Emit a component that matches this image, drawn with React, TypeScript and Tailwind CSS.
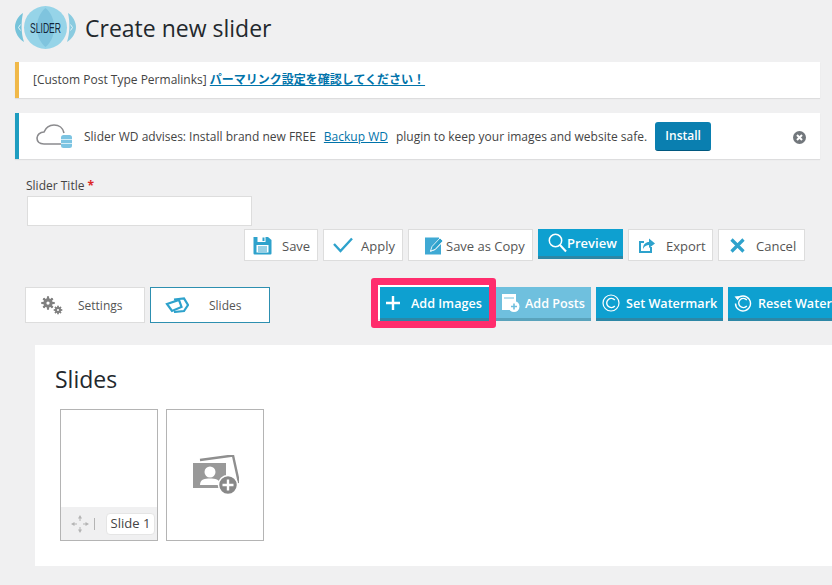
import React from "react";

const font = { fontFamily: '"Open Sans","Noto Sans CJK JP",sans-serif' };

function Logo() {
  return (
    <svg width="61" height="45" viewBox="0 0 61 45" className="shrink-0">
      <path d="M8 8 C3 11 0 17 0 22 C0 28 4 34 9 37 C6 28 6 17 8 8Z" fill="#76c3da" />
      <path d="M53 8 C58 11 61 17 61 22 C61 28 57 34 52 37 C55 28 55 17 53 8Z" fill="#8acbe0" />
      <path d="M5.5 19.5 L3.5 22.5 L5.5 25.5 M55.5 19.5 L57.5 22.5 L55.5 25.5" fill="none" stroke="#e2f3f8" strokeWidth="1" />
      <circle cx="30.5" cy="22.5" r="21.5" fill="#96d4e8" />
      <path d="M30.5 3 C42 12 42 33 30.5 42 C19 33 19 12 30.5 3Z" fill="#7fc4de" />
      <text x="30.5" y="27.5" textAnchor="middle" fontSize="14" fill="#12263a" style={{ fontFamily: '"Liberation Sans",sans-serif' }} textLength="31" lengthAdjust="spacingAndGlyphs">SLIDER</text>
    </svg>
  );
}

function Cloud() {
  return (
    <svg width="37" height="24" viewBox="0 0 37 24" className="shrink-0">
      <path d="M26 20 H8 C3 20 1 17 1 14 C1 11 4 8 8 8 C10 3 14 1 18 1 C23 1 27 4 28 9" fill="none" stroke="#8b8b8e" strokeWidth="1.6" />
      <rect x="25" y="11" width="11" height="13" rx="2.5" fill="#7cc4e2" />
      <path d="M25 15.5H36M25 19.5H36" stroke="#d5eef8" strokeWidth="1" />
    </svg>
  );
}

function SaveIcon() {
  return (
    <svg width="19" height="19" viewBox="0 0 19 19">
      <path d="M1 1H15L18.5 4V17.5a1 1 0 0 1-1 1H1.5a1 1 0 0 1-1-1V1.5Z" fill="#2ea2cc" />
      <rect x="4.5" y="1" width="8" height="5" fill="#fff" />
      <rect x="9.5" y="1.5" width="2" height="3.5" fill="#2ea2cc" />
      <rect x="3.5" y="9" width="12" height="7.5" fill="#fff" />
      <path d="M5 11H14M5 13H14M5 15H14" stroke="#2ea2cc" strokeWidth="1" />
    </svg>
  );
}

function CheckIcon() {
  return (
    <svg width="20" height="16" viewBox="0 0 20 16">
      <path d="M1 7 L7.5 14 L19 1.5" fill="none" stroke="#2ea2cc" strokeWidth="2.4" />
    </svg>
  );
}

function CopyIcon() {
  return (
    <svg width="19" height="19" viewBox="0 0 19 19">
      <path d="M0 1.5H14V4L7 11L5 16L10 14L16 8V18.5H0Z" fill="#3fa9d4" />
      <path d="M5.5 15 L7 10.5 L15 2 L18 5 L10 13.5Z" fill="#2ea2cc" stroke="#fff" strokeWidth="0.8" />
    </svg>
  );
}

function SearchIcon() {
  return (
    <svg width="19" height="20" viewBox="0 0 19 20">
      <circle cx="7.5" cy="7.5" r="6.2" fill="none" stroke="#fff" strokeWidth="1.5" />
      <path d="M12 12 L18 18.5" stroke="#fff" strokeWidth="2" />
    </svg>
  );
}

function ExportIcon() {
  return (
    <svg width="17" height="15" viewBox="0 0 17 15">
      <path d="M1 3H6V5H3V13H12V9H14V15H1Z" fill="#2ea2cc" />
      <path d="M5 11 C5 6 8 4 11 4 V0.5 L17 5.5 L11 10 V7 C8.5 7 6.5 8 5 11Z" fill="#2ea2cc" />
    </svg>
  );
}

function CancelIcon() {
  return (
    <svg width="15" height="15" viewBox="0 0 15 15">
      <path d="M1.5 1.5 L13.5 13.5 M13.5 1.5 L1.5 13.5" stroke="#2ea2cc" strokeWidth="3.2" />
    </svg>
  );
}

function GearIcon({ size, x, y }: { size: number; x: number; y: number }) {
  const teeth = [0, 45, 90, 135, 180, 225, 270, 315];
  return (
    <g transform={`translate(${x} ${y})`}>
      {teeth.map((a) => (
        <rect key={a} x={-size * 0.16} y={-size} width={size * 0.32} height={size * 2} fill="#808080" transform={`rotate(${a})`} />
      ))}
      <circle r={size * 0.72} fill="#808080" />
      <circle r={size * 0.25} fill="#fff" />
    </g>
  );
}

function GearsIcon() {
  return (
    <svg width="22" height="19" viewBox="0 0 22 19">
      <GearIcon size={6.5} x={7} y={7} />
      <GearIcon size={4.2} x={17} y={14} />
    </svg>
  );
}

function SlidesIcon() {
  return (
    <svg width="24" height="16" viewBox="0 0 24 16">
      <path d="M9 2.5 L19 1.5 L23 8 L19 14 L9 15" fill="none" stroke="#2ea2cc" strokeWidth="2.2" />
      <path d="M2 7 L14 3 L16.5 10 L7 14 Z" fill="#fff" stroke="#2ea2cc" strokeWidth="2.2" />
    </svg>
  );
}

function PlusIcon() {
  return (
    <svg width="14" height="14" viewBox="0 0 14 14">
      <path d="M7 0V14M0 7H14" stroke="#fff" strokeWidth="2.4" />
    </svg>
  );
}

function PostsIcon() {
  return (
    <svg width="18" height="18" viewBox="0 0 18 18">
      <path d="M0 0H14V10H9V16H0Z" fill="#fff" />
      <path d="M2 4H12" stroke="#6fc0de" strokeWidth="1" />
      <circle cx="12" cy="12.5" r="5.5" fill="#fff" />
      <path d="M12 9.5V15.5M9 12.5H15" stroke="#6fc0de" strokeWidth="1.6" />
    </svg>
  );
}

function CopyrightIcon({ reset }: { reset?: boolean }) {
  return (
    <svg width="18" height="18" viewBox="0 0 18 18">
      {reset ? (
        <>
          <path d="M3 5 A7.5 7.5 0 1 1 1.5 9.5" fill="none" stroke="#fff" strokeWidth="1.4" />
          <path d="M0.5 2.5 L5 2 L4 6.5Z" fill="#fff" />
        </>
      ) : (
        <circle cx="9" cy="9" r="8" fill="none" stroke="#fff" strokeWidth="1.2" />
      )}
      <path d="M12.8 6 A4.6 4.6 0 1 0 12.8 12" fill="none" stroke="#fff" strokeWidth="1.4" />
    </svg>
  );
}

function MoveIcon() {
  return (
    <svg width="20" height="20" viewBox="0 0 20 20">
      <path d="M10 1 L12 4.5H8Z M10 19 L12 15.5H8Z M1 10 L4.5 8V12Z M19 10 L15.5 8V12Z" fill="#b4b4b4" />
      <path d="M10 4V7M10 13V16M4 10H7M13 10H16" stroke="#b4b4b4" strokeWidth="1" />
    </svg>
  );
}

function AddSlideIcon() {
  return (
    <svg width="46" height="40" viewBox="0 0 46 40">
      <path d="M7 5 L40 0.5 L46 28" fill="none" stroke="#8f8f8f" strokeWidth="2.4" />
      <rect x="0" y="8" width="33" height="25" fill="#999" />
      <circle cx="17" cy="17" r="5.5" fill="#fff" />
      <path d="M7 30 C7 24 12 23.5 17 23.5 C22 23.5 27 24 27 30Z" fill="#fff" />
      <circle cx="35" cy="30" r="9.5" fill="#888" stroke="#fff" strokeWidth="1.5" />
      <path d="M35 24.5V35.5M29.5 30H40.5" stroke="#fff" strokeWidth="2.4" />
    </svg>
  );
}

function ActionButton({ icon, label, className, labelClass }: { icon: React.ReactNode; label: string; className: string; labelClass: string }) {
  return (
    <button className={`flex h-8 shrink-0 items-center border border-[#dddddd] bg-white text-[13px] text-[#555555] ${className}`}>
      {icon}
      <span className={`pt-[3px] ${labelClass}`}>{label}</span>
    </button>
  );
}

function BlueButton({ icon, label, className, labelClass }: { icon: React.ReactNode; label: string; className: string; labelClass: string }) {
  return (
    <button className={`flex h-[34px] shrink-0 items-center border-b-[3px] text-[12.6px] font-semibold text-white ${className}`}>
      {icon}
      <span className={`whitespace-nowrap pt-1 ${labelClass}`}>{label}</span>
    </button>
  );
}

export default function App() {
  return (
    <div className="h-[585px] w-[832px] overflow-hidden bg-[#f0f0f1]" style={font}>
      <header className="flex h-[62px] items-start pl-[15px] pt-[5px]">
        <Logo />
        <h1 className="ml-[9px] mt-[6px] text-[23px] leading-[34px] text-[#23282d]">Create new slider</h1>
      </header>

      <div className="ml-[15px] flex h-9 w-[805px] items-center border-l-4 border-[#f0b849] bg-white pl-[14px] text-xs text-[#444444] shadow-[0_1px_1px_rgba(0,0,0,0.08)]">
        <span>[Custom Post Type Permalinks]&nbsp;</span>
        <a className="font-semibold text-[#0073aa] underline" href="#">パーマリンク設定を確認してください！</a>
      </div>

      <div className="ml-[15px] mt-[15px] flex h-[46px] w-[805px] items-center border-l-4 border-[#1e9dc0] bg-white pl-[17px] text-xs text-[#444444] shadow-[0_1px_1px_rgba(0,0,0,0.08)]">
        <Cloud />
        <span className="ml-[11px] whitespace-nowrap pt-0.5">Slider WD advises: Install brand new FREE</span>
        <a className="ml-2 pt-0.5 text-[#0073aa] underline" href="#">Backup WD</a>
        <span className="ml-2 whitespace-nowrap pt-0.5">plugin to keep your images and website safe.</span>
        <button className="ml-2 h-[29px] w-14 rounded-[3px] border-b border-[#00587f] bg-[#0a7fb0] text-xs font-semibold text-white">Install</button>
        <svg width="13" height="13" viewBox="0 0 13 13" className="ml-[82px] mt-0.5">
          <circle cx="6.5" cy="6.5" r="6.5" fill="#72777c" />
          <path d="M4 4L9 9M9 4L4 9" stroke="#fff" strokeWidth="2" />
        </svg>
      </div>

      <label className="ml-[26px] mt-[19px] block text-xs leading-4 text-[#444444]">
        Slider Title <span className="font-bold text-[#dc2626]">*</span>
      </label>
      <input className="ml-[27px] mt-[2px] block h-[30px] w-[225px] border border-[#dddddd] bg-white" />

      <div className="ml-[244px] mt-[3px] flex items-start gap-[5px]">
        <ActionButton className="w-[74px] pl-2" icon={<SaveIcon />} label="Save" labelClass="ml-[10px]" />
        <ActionButton className="w-20 pl-[9px]" icon={<CheckIcon />} label="Apply" labelClass="ml-2" />
        <ActionButton className="w-[125px] pl-4" icon={<CopyIcon />} label="Save as Copy" labelClass="ml-[2px]" />
        <button className="flex h-[30px] w-[85px] shrink-0 items-center border-b-[3px] border-[#2d87a6] bg-[#0ea0d0] pl-[10px] text-[13px] font-semibold text-white">
          <SearchIcon />
          <span className="pt-0.5">Preview</span>
        </button>
        <ActionButton className="w-[85px] pl-[9px]" icon={<ExportIcon />} label="Export" labelClass="ml-[11px]" />
        <ActionButton className="w-[87px] pl-[11px]" icon={<CancelIcon />} label="Cancel" labelClass="ml-[11px]" />
      </div>

      <div className="mt-[26px] flex items-start pl-[25px]">
        <button className="flex h-9 w-[120px] shrink-0 items-center border border-[#dddddd] bg-white pl-[15px] text-xs text-[#555555]">
          <GearsIcon />
          <span className="ml-[15px] pt-0.5">Settings</span>
        </button>
        <button className="ml-[5px] flex h-9 w-[120px] shrink-0 items-center border border-[#2d8fb0] bg-white pl-[14px] text-xs text-[#555555]">
          <SlidesIcon />
          <span className="ml-5 pt-0.5">Slides</span>
        </button>

        <div className="relative ml-[110px] flex items-start">
          <BlueButton className="w-[109px] border-[#2d87a6] bg-[#0ea0d0] pl-1.5" icon={<PlusIcon />} label="Add Images" labelClass="ml-[11px]" />
          <div className="absolute left-[-9px] top-[-9px] h-[50px] w-[125px] rounded-[3px] border-[7px] border-[#ff2d6d]" />
          <div className="absolute left-[-2px] top-[-2px] h-[34px] w-[2px] bg-white" />
          <div className="absolute left-[-2px] top-[-2px] h-[2px] w-[111px] bg-white" />
          <BlueButton className="ml-[7px] w-[95px] border-[#5aa3bc] bg-[#6fc0de] pl-[6px]" icon={<PostsIcon />} label="Add Posts" labelClass="ml-[5px]" />
          <BlueButton className="ml-[5px] w-[127px] border-[#2d87a6] bg-[#0ea0d0] pl-[6px]" icon={<CopyrightIcon />} label="Set Watermark" labelClass="ml-[6px]" />
          <BlueButton className="ml-[5px] w-[104px] overflow-hidden border-[#2d87a6] bg-[#0ea0d0] pl-[6px]" icon={<CopyrightIcon reset />} label="Reset Water" labelClass="ml-[6px]" />
        </div>
      </div>

      <main className="ml-[35px] mt-[22px] h-[221px] bg-white pl-5 pt-[17px]">
        <h2 className="text-[23px] leading-[34px] text-[#23282d]">Slides</h2>
        <div className="ml-[5px] mt-[13px] flex gap-2">
          <div className="flex h-[132px] w-[98px] flex-col justify-end border border-[#b4b4b4]">
            <div className="flex h-[33px] items-center bg-[#f0f0f1] pl-[9px]">
              <MoveIcon />
              <span className="ml-1 h-3 w-px bg-[#b4b4b4]" />
              <span className="ml-[11px] flex h-[22px] w-[49px] items-center justify-center rounded-sm border border-[#e5e5e5] bg-white text-[13px] text-[#444444]">Slide 1</span>
            </div>
          </div>
          <div className="flex h-[132px] w-[98px] items-center justify-center border border-[#b4b4b4] pl-[2px]">
            <AddSlideIcon />
          </div>
        </div>
      </main>
    </div>
  );
}
